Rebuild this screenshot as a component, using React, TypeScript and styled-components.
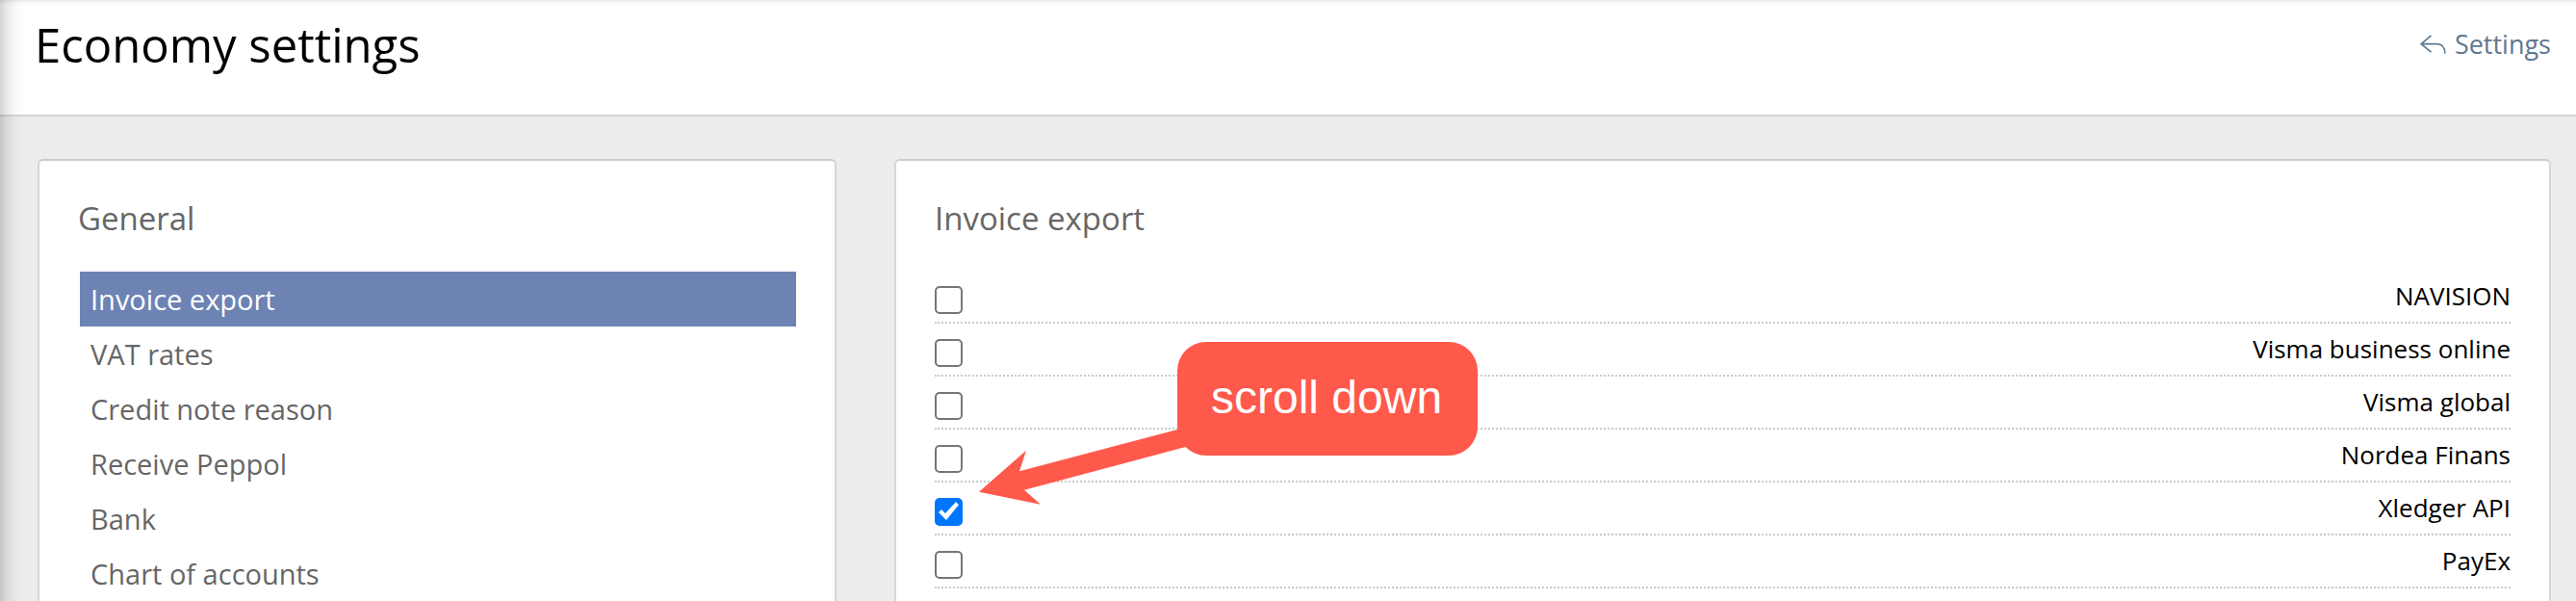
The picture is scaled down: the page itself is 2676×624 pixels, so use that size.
import React from 'react';
import styled, { createGlobalStyle } from 'styled-components';

const GlobalStyle = createGlobalStyle`
  *, *::before, *::after { box-sizing: border-box; }
  body {
    margin: 0;
    background: #ededed;
    color: #000;
    font-family: 'Open Sans', 'Noto Sans', sans-serif;
    font-size: 26px;
  }
`;

const Page = styled.div`
  position: relative;
  min-height: 100vh;
`;

const EdgeShadow = styled.div`
  position: absolute;
  inset: 0;
  pointer-events: none;
  background:
    linear-gradient(to right, rgba(0, 0, 0, 0.17), rgba(0, 0, 0, 0.08) 8px, rgba(0, 0, 0, 0.02) 17px, transparent 26px),
    linear-gradient(to bottom, rgba(0, 0, 0, 0.09), rgba(0, 0, 0, 0.02) 3px, transparent 6px);
`;

const Header = styled.header`
  display: flex;
  align-items: center;
  justify-content: space-between;
  padding: 14px 26px 40px 36px;
  background: #fff;
  border-bottom: 2px solid #d6d6d6;
`;

const Title = styled.h1`
  margin: 0;
  font-size: 49px;
  font-weight: 400;
  line-height: 65px;
`;

const BackLink = styled.a`
  display: flex;
  align-items: center;
  gap: 9px;
  padding-bottom: 2px;
  color: #5f7991;
  font-size: 27px;
  line-height: 36px;
  text-decoration: none;
`;

const Columns = styled.main`
  display: grid;
  grid-template-columns: 830fr 1721fr;
  gap: 60px;
  padding: 44px 26px 44px 39px;
`;

const Card = styled.section`
  padding: 37px 40px 40px;
  background: #fff;
  border: 2px solid #d6d6d6;
  border-top-color: #cbcbcb;
  border-radius: 6px;
`;

const CardTitle = styled.h2`
  margin: 0 0 31px;
  color: #666;
  font-size: 33px;
  font-weight: 400;
  line-height: 46px;
`;

const Nav = styled.nav`
  display: flex;
  flex-direction: column;
  padding: 1px 0 0 2px;
`;

const NavLink = styled.a<{ $active: boolean }>`
  padding: 0 11px;
  background: ${(p) => (p.$active ? '#6d83b4' : 'transparent')};
  color: ${(p) => (p.$active ? '#fff' : '#666')};
  font-size: 29px;
  line-height: 57px;
  text-decoration: none;
`;

const Options = styled.ul`
  position: relative;
  margin: 0;
  padding: 0;
  list-style: none;
`;

const Option = styled.li`
  display: flex;
  align-items: flex-start;
  justify-content: space-between;
  height: 55px;
  border-bottom: 2px dotted #c9c9c9;
`;

const OptionLabel = styled.label`
  line-height: 52px;
`;

const Checkbox = styled.input`
  appearance: none;
  width: 29px;
  height: 29px;
  margin: 16px 0 0;
  background: #fff;
  border: 2px solid #767676;
  border-radius: 5px;

  &:checked {
    background: #0075ff;
    border: 0;
  }

  &:checked::after {
    content: '';
    display: block;
    width: 29px;
    height: 29px;
    background: #fff;
    clip-path: polygon(4px 15px, 7px 12px, 11px 16px, 22px 4px, 25px 7px, 12px 23px);
  }
`;

const Callout = styled.li`
  position: absolute;
  top: 74px;
  left: 46px;
  padding-left: 206px;
`;

const Bubble = styled.div`
  padding: 30px 37px 32px 35px;
  background: #ff594b;
  border-radius: 30px;
  color: #fff;
  font-family: 'Liberation Sans', Arial, sans-serif;
  font-size: 48px;
  line-height: 56px;
  white-space: nowrap;
`;

const Arrow = styled.svg`
  position: absolute;
  top: 90px;
  left: 0;
`;

const navItems = ['Invoice export', 'VAT rates', 'Credit note reason', 'Receive Peppol', 'Bank', 'Chart of accounts'];

const exportTargets = [
  { id: 'navision', label: 'NAVISION' },
  { id: 'visma-business', label: 'Visma business online' },
  { id: 'visma-global', label: 'Visma global' },
  { id: 'nordea', label: 'Nordea Finans' },
  { id: 'xledger', label: 'Xledger API', checked: true },
  { id: 'payex', label: 'PayEx' },
];

const BackIcon = () => (
  <svg width="27" height="20" viewBox="0 0 27 20" fill="none" stroke="currentColor" strokeWidth="1.6" aria-hidden="true">
    <path d="M11.5 0.8 L1.2 9.6 L11.5 18.2 M1.2 9.6 H17 C23 9.6 25.9 13 25.9 19.6" />
  </svg>
);

export default function App() {
  return (
    <Page>
      <GlobalStyle />
      <Header>
        <Title>Economy settings</Title>
        <BackLink href="#settings">
          <BackIcon />
          Settings
        </BackLink>
      </Header>
      <Columns>
        <Card>
          <CardTitle>General</CardTitle>
          <Nav aria-label="General">
            {navItems.map((item, i) => (
              <NavLink key={item} href="#" $active={i === 0} aria-current={i === 0 ? 'page' : undefined}>
                {item}
              </NavLink>
            ))}
          </Nav>
        </Card>
        <Card>
          <CardTitle>Invoice export</CardTitle>
          <Options>
            {exportTargets.map((t) => (
              <Option key={t.id}>
                <Checkbox type="checkbox" id={t.id} defaultChecked={t.checked} />
                <OptionLabel htmlFor={t.id}>{t.label}</OptionLabel>
              </Option>
            ))}
            <Callout>
              <Arrow width="230" height="80" viewBox="0 0 230 80" aria-hidden="true">
                <path d="M0 65.7 L49 22.7 L42 44.3 L206 1 H230 V16 L214.7 19 L47 63.7 L64 78.7 Z" fill="#ff594b" />
              </Arrow>
              <Bubble>scroll down</Bubble>
            </Callout>
          </Options>
        </Card>
      </Columns>
      <EdgeShadow />
    </Page>
  );
}
